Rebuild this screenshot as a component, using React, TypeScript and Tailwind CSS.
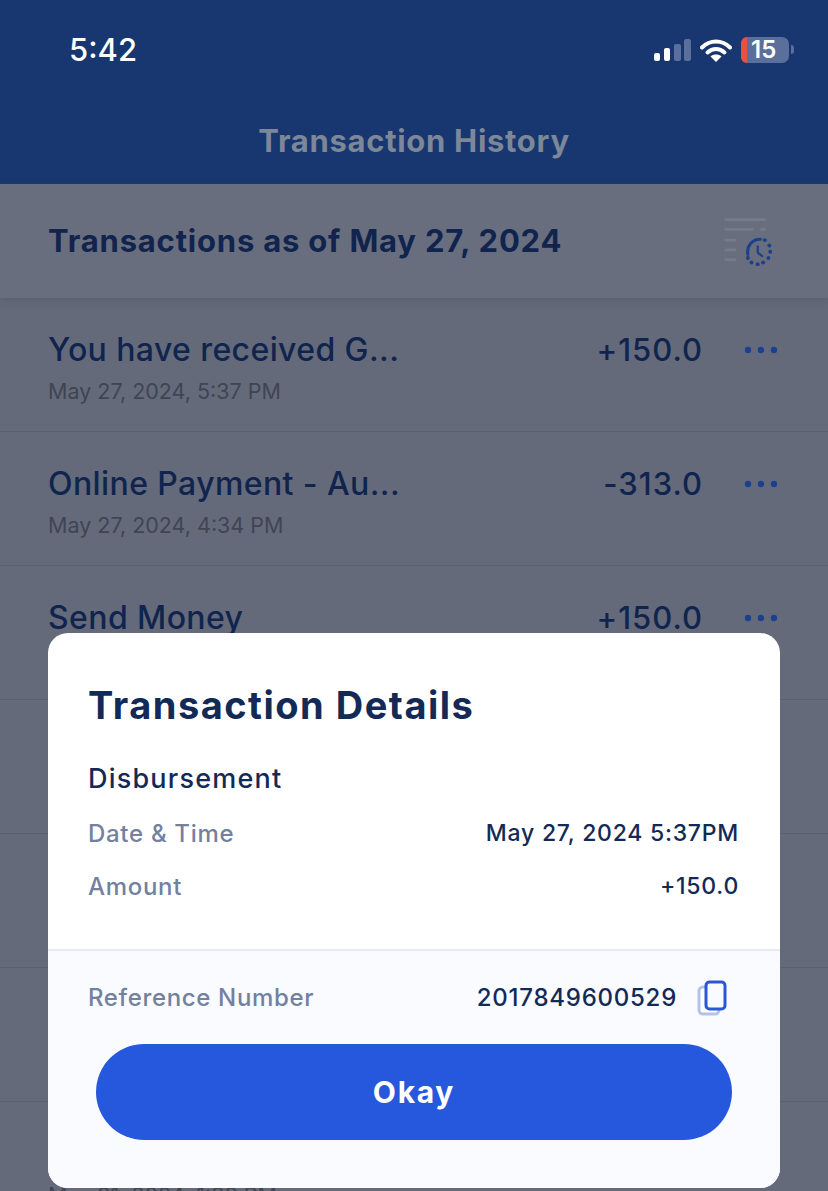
import React from 'react'

const font = { fontFamily: '"Inter", "Noto Sans", sans-serif' }

const rows = [
  { title: 'You have received G...', date: 'May 27, 2024, 5:37 PM', amount: '+150.0' },
  { title: 'Online Payment - Au...', date: 'May 27, 2024, 4:34 PM', amount: '-313.0' },
  { title: 'Send Money', date: 'May 27, 2024, 4:30 PM', amount: '+150.0' },
  { title: '', date: '', amount: '' },
  { title: '', date: '', amount: '' },
  { title: '', date: '', amount: '' },
  { title: '', date: 'May 21, 2024, 1:38 PM', amount: '' },
]

const Dots = () => (
  <svg width="34" height="8" viewBox="0 0 34 8" className="shrink-0">
    <circle cx="4" cy="4" r="3.2" fill="#1d3f8f" />
    <circle cx="17" cy="4" r="3.2" fill="#1d3f8f" />
    <circle cx="30" cy="4" r="3.2" fill="#1d3f8f" />
  </svg>
)

const HistoryIcon = () => (
  <svg width="50" height="50" viewBox="0 0 56 56" fill="none">
    <g stroke="#757b8a" strokeWidth="3">
      <path d="M3 4h46" />
      <path d="M3 15h32M43 15h6" />
      <path d="M3 27h13" />
      <path d="M3 38h13" />
      <path d="M3 49h13" />
    </g>
    <path d="M29 43a14 14 0 0 1 14-17" stroke="#1d3f8c" strokeWidth="3.5" strokeLinecap="round" />
    <g fill="#1d3f8c">
      <circle cx="48" cy="27" r="2.2" />
      <circle cx="53" cy="33" r="2.2" />
      <circle cx="54" cy="40" r="2.2" />
      <circle cx="52" cy="47" r="2.2" />
      <circle cx="46" cy="52" r="2.2" />
      <circle cx="40" cy="54" r="2.2" />
      <circle cx="33" cy="52" r="2.2" />
      <circle cx="29" cy="47" r="2.2" />
    </g>
    <path d="M40 34v7l5 4" stroke="#1d3f8c" strokeWidth="2.5" strokeLinecap="round" strokeLinejoin="round" />
  </svg>
)

const StatusIcons = () => (
  <div className="flex items-center">
    <svg width="38" height="24" viewBox="0 0 38 24" className="mr-[9px]">
      <rect x="1" y="15" width="6" height="8" rx="2" fill="#fff" />
      <rect x="11" y="10" width="6" height="13" rx="2" fill="#fff" />
      <rect x="21" y="6" width="7" height="17" rx="2" fill="#5b6f9c" />
      <rect x="31" y="1" width="7" height="22" rx="2" fill="#5b6f9c" />
    </svg>
    <svg width="32" height="24" viewBox="0 0 32 24" fill="none" className="mr-[9px]">
      <path d="M2 9.5C10 1.5 22 1.5 30 9.5" stroke="#fff" strokeWidth="4" strokeLinecap="round" />
      <path d="M7.5 14.5C12.5 9.8 19.5 9.8 24.5 14.5" stroke="#fff" strokeWidth="4" strokeLinecap="round" />
      <path d="M16 24l-5.5-5.6c3-2.6 8-2.6 11 0z" fill="#fff" />
    </svg>
    <div className="w-[48px] h-[26px] rounded-[7px] bg-[#5b6f9c] flex items-center">
      <div className="w-[6px] h-full rounded-l-[7px] bg-[#e5533f] shrink-0" />
      <span className="ml-[4px] text-white text-[24px] leading-none font-semibold">15</span>
    </div>
    <div className="w-[3px] h-[9px] ml-[2px] rounded-r-full bg-[#5b6f9c]" />
  </div>
)

const CopyIcon = () => (
  <svg width="30" height="36" viewBox="0 0 30 36" fill="none">
    <rect x="2" y="7" width="20" height="27" rx="4" fill="#fff" stroke="#b3c4ea" strokeWidth="3" />
    <rect x="9" y="2" width="19" height="27" rx="3.5" fill="#f9fbff" stroke="#2a58d2" strokeWidth="3" />
  </svg>
)

const DetailRow = ({ label, value }: { label: string; value: string }) => (
  <div className="flex items-center justify-between h-[53px]">
    <span className="-ml-[1px] text-[24px] font-medium text-[#71819f] tracking-[0.7px]">{label}</span>
    <span className="text-[23px] font-medium text-[#132a57] tracking-[0.75px]">{value}</span>
  </div>
)

export default function App() {
  return (
    <div style={font} className="relative w-[828px] h-[1191px] overflow-hidden bg-[#646a7a]">
      <header className="h-[184px] bg-[#18366f] flex flex-col">
        <div className="flex items-center justify-between pl-[69px] pr-[34px] pt-[29px] h-[70px]">
          <span className="text-white text-[31px] font-medium leading-none">5:42</span>
          <StatusIcons />
        </div>
        <div className="flex-1 flex items-center justify-center pt-[28px]">
          <h1 className="text-[31px] font-bold text-[#7c8798] tracking-[0.7px]">Transaction History</h1>
        </div>
      </header>

      <section className="h-[114px] bg-[#686e7e] flex items-center justify-between pl-[48px] pr-[56px] shadow-[0_2px_8px_rgba(60,65,80,0.3)]">
        <h2 className="text-[31px] font-bold text-[#10244e] tracking-[0.8px]">Transactions as of May 27, 2024</h2>
        <HistoryIcon />
      </section>

      <ul>
        {rows.map((row, i) => (
          <li key={i} className="h-[134px] border-b border-[#596070] pl-[48px] pr-[50px] pt-[26px]">
            <div className="flex items-center justify-between h-[52px]">
              <span className="text-[32px] font-medium text-[#10244e] tracking-[0.4px]">{row.title}</span>
              {row.amount && (
                <div className="flex items-center gap-[41px]">
                  <span className="text-[31px] font-medium text-[#10244e] tracking-[1px]">{row.amount}</span>
                  <Dots />
                </div>
              )}
            </div>
            <p className="pt-[1px] text-[21.5px] leading-[28px] text-[#3f4552]">{row.date}</p>
          </li>
        ))}
      </ul>

      <div className="absolute left-[48px] top-[633px] w-[732px] h-[555px] rounded-[20px] bg-white overflow-hidden flex flex-col">
        <div className="h-[318px] px-[41px] pt-[48px] border-b-2 border-[#e7ebf1]">
          <h3 className="-ml-[1px] text-[38px] leading-[48px] font-bold text-[#132a57] tracking-[1.5px]">Transaction Details</h3>
          <p className="mt-[32px] mb-[10px] -ml-[1px] text-[27px] leading-[36px] font-medium text-[#132a57] tracking-[1.2px]">Disbursement</p>
          <DetailRow label="Date & Time" value="May 27, 2024 5:37PM" />
          <DetailRow label="Amount" value="+150.0" />
        </div>
        <div className="flex-1 bg-[#f9fbff] flex flex-col">
          <div className="flex items-center justify-between pl-[40px] pr-[53px] h-[93px] pt-[1px]">
            <span className="text-[24px] font-medium text-[#71819f] tracking-[0.65px]">Reference Number</span>
            <div className="flex items-center gap-[20px]">
              <span className="text-[24px] font-medium text-[#132a57] tracking-[0.75px]">2017849600529</span>
              <CopyIcon />
            </div>
          </div>
          <button className="mx-[48px] h-[96px] rounded-full bg-[#2558dc] text-white text-[30px] font-bold tracking-[1.7px]">Okay</button>
        </div>
      </div>
    </div>
  )
}
